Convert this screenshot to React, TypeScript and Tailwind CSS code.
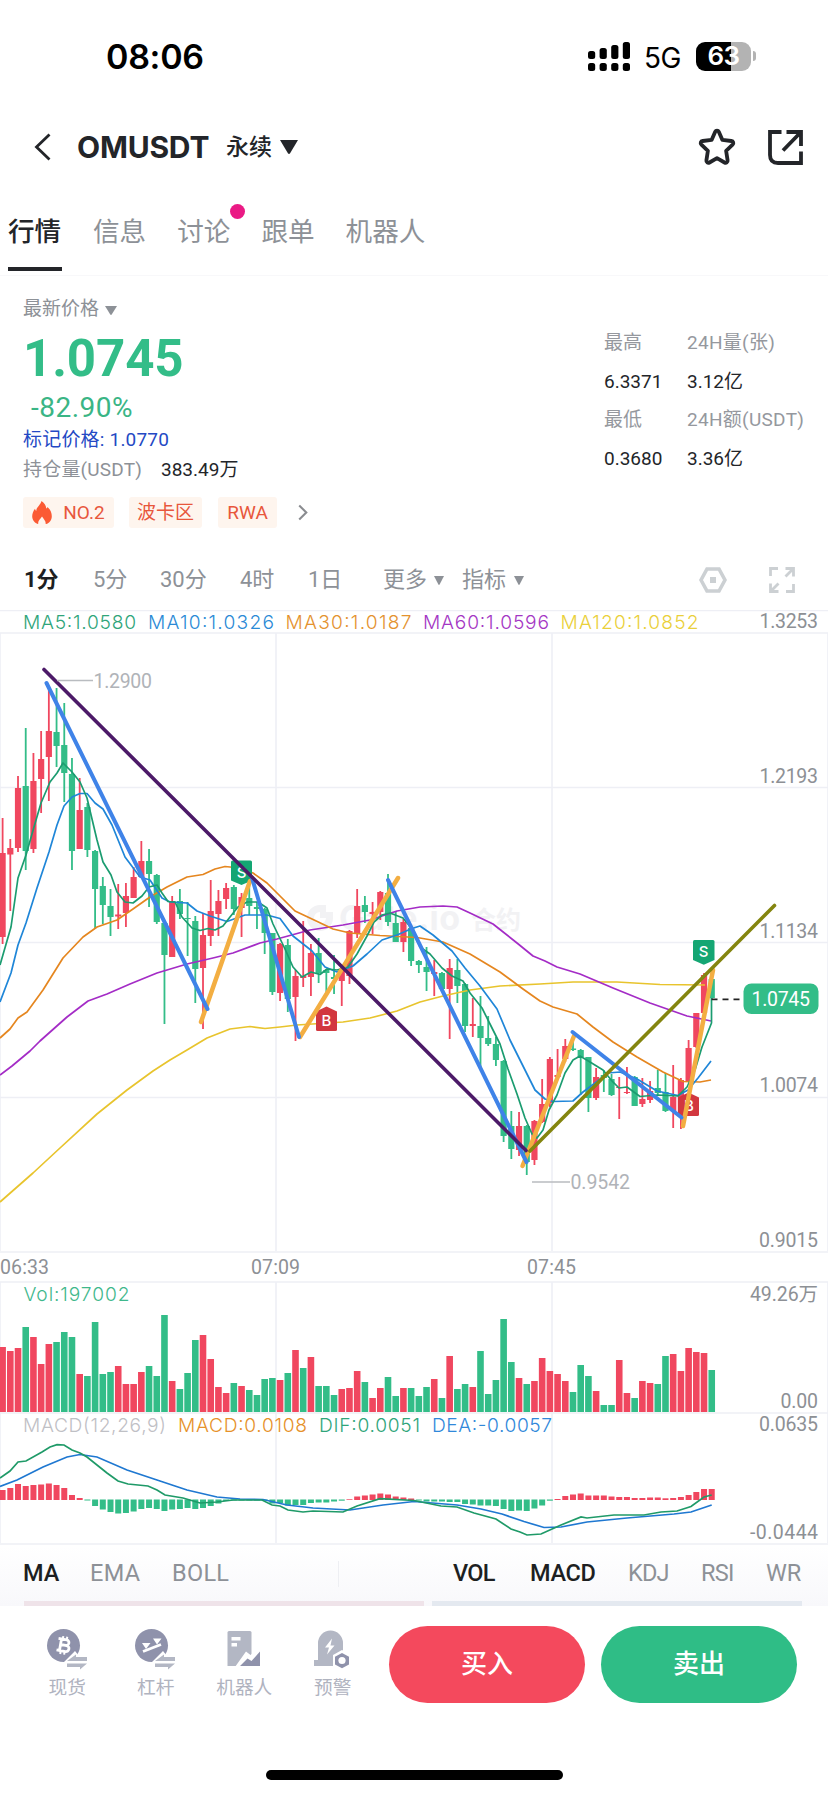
import type { ReactNode } from "react";

const UP = "#f0475f";
const DOWN = "#33bd88";
const GRID = "#eeeff5";

const PITCH = 7.708;
const START_X = 2.6;

type Candle = ["u" | "d", number, number, number, number];

// direction, high, low, body top, body bottom
const CANDLES: Candle[] = [
  ["u", 818, 944, 853, 937], ["u", 839, 911, 848, 854.5], ["u", 776, 852, 788, 848], ["d", 728, 870, 786, 851],
  ["u", 753, 853, 781, 849], ["u", 731, 813, 759, 779], ["u", 690, 801, 731, 757], ["d", 688, 767, 732, 746],
  ["d", 703, 802, 745, 773], ["d", 758, 870, 774, 851], ["u", 778, 849, 810, 849], ["d", 803, 857, 807, 850],
  ["d", 850, 929, 851, 889], ["d", 877, 924, 886, 905], ["d", 889, 936, 906, 917], ["u", 884, 929, 914.5, 916.5],
  ["u", 883, 927, 896, 913], ["u", 867, 898, 877, 898], ["u", 841, 877, 861, 877], ["d", 849, 907, 861, 874],
  ["d", 874, 924, 875, 922], ["d", 922, 1024, 923, 955], ["u", 896, 957, 901, 957], ["d", 889, 919, 901, 914],
  ["d", 902, 956, 918, 919], ["d", 916, 1003, 921, 969], ["u", 913, 1029, 935, 968], ["u", 880, 946, 911, 936],
  ["u", 890, 936, 901, 914], ["u", 883, 909, 888, 899], ["d", 885, 915, 887, 909], ["u", 893, 937, 897, 908],
  ["d", 885, 915, 898, 906], ["d", 902, 929, 907, 909], ["d", 908, 954, 909, 933], ["d", 933, 995, 933, 992],
  ["u", 943, 1001, 944, 993], ["d", 939, 1012, 945, 999], ["u", 970, 1041, 976, 997], ["u", 921, 987, 976, 978],
  ["u", 944, 996, 953, 977], ["d", 938, 983, 953, 973], ["d", 969, 994, 970, 973], ["d", 955, 994, 977, 979],
  ["u", 968, 1006, 969, 981], ["u", 930, 984, 931, 976], ["u", 889, 938, 906, 934], ["d", 896, 923, 905, 912],
  ["u", 902, 934, 912, 914], ["u", 891, 920, 892, 912], ["d", 874, 926, 893, 922], ["d", 911, 942, 923, 942],
  ["u", 919, 952, 922, 942], ["d", 926, 966, 928, 961], ["d", 960, 973, 961, 965], ["d", 947, 991, 967, 972],
  ["u", 960, 996, 972, 974], ["d", 972, 990, 973, 989], ["u", 959, 1039, 968, 989], ["d", 959, 1003, 970, 986],
  ["d", 983, 1032, 984, 1026], ["u", 998, 1037, 1024, 1026], ["d", 996, 1069, 1026, 1038], ["d", 1016, 1046, 1038, 1044],
  ["d", 1037, 1066, 1044, 1060], ["d", 1060, 1142, 1061, 1136], ["d", 1111, 1159, 1126, 1149], ["u", 1112, 1156, 1126, 1150],
  ["d", 1125, 1175, 1126, 1162], ["u", 1120, 1165, 1121, 1160], ["u", 1079, 1123, 1104, 1122], ["u", 1057, 1107, 1059, 1103],
  ["u", 1049, 1078, 1075, 1077], ["u", 1039, 1062, 1046, 1059], ["d", 1037, 1051, 1048.5, 1050], ["d", 1049, 1095, 1050, 1057],
  ["d", 1057, 1112, 1057, 1098], ["u", 1068, 1100, 1077, 1098], ["d", 1070, 1092, 1075, 1078], ["d", 1074, 1096, 1079, 1095],
  ["u", 1077, 1119, 1087, 1088], ["u", 1067, 1094, 1092, 1093], ["d", 1076, 1106, 1077, 1106], ["u", 1078, 1107, 1099, 1104],
  ["u", 1081, 1103, 1091, 1100], ["d", 1070, 1096, 1088, 1093], ["d", 1073, 1112, 1092, 1111], ["u", 1065, 1128, 1097, 1111],
  ["u", 1078, 1129, 1080, 1113], ["u", 1040, 1082, 1048, 1081], ["u", 1013, 1048, 1013, 1047], ["u", 973, 1013, 975, 1013],
  ["d", 973, 999, 979, 998],
];

// bar heights, negative for a falling minute
const VOLUMES = [
  65, 61, 64, -85, 75, 48, 68, -70, -80, -75, 38, -36, -90, -38, -40, 46, 28, 28, 40, -46,
  -36, -97, 31, -23, -39, -72, 77, 53, 25, 19, -29, 26, -22, -17, -33, -34, 32, -39, 62, -44,
  55, -26, -26, -17, 23, 24, 41, -30, 14, 24, -35, -16, 24, -24, -16, -25, 33, -14, 56, -23,
  -28, 25, -61, -18, -32, -93, -50, 34, -28, 31, 54, 41, 38, 31, -20, -47, -36, 21, -7, -7,
  52, 19, -14, 31, 29, -28, -56, 58, 41, 64, 60, 59, -42,
];

const MACD = [
  10, 12, 16, 14, 15, 15.5, 16.5, 15, 12, 5, 2, -1, -6.5, -10, -12.5, -14, -13.5, -12, -9.5, -8.5,
  -9.5, -11.5, -10, -9.5, -8.5, -9.5, -8.5, -6.5, -4, -1.5, -1, -1, -1, -1, -1, -4, -3.5, -6, -5.5, -5.5,
  -3.5, -3, -3, -2, -1.2, 0.7, 3.5, 4.5, 5.5, 6.5, 5.5, 3.5, 2.5, 1.5, -1, -2, -2, -2, -2.5, -2.5,
  -4.5, -5, -6, -6, -6.5, -9.5, -11.5, -11, -11.5, -9, -6, -1.2, 1, 4, 5.5, 6.5, 4.5, 4.5, 4.5, 3.5,
  3, 3, 2, 2, 2.5, 2.5, 1.7, 2, 3, 5, 8, 11, 11,
];

const AVERAGES = [
  {
    color: "#e8c42d",
    points:
      "0,1202 33,1173 60,1148 97,1114 127,1090 153,1071 170,1060 187,1050 207,1038 230,1029 250,1026.5 265,1028.5 280,1027 297,1025 343,1022 370,1018 397,1011 420,1002 443,996 470,990 500,986 540,984 573,982 617,982 660,984.5 705,985",
  },
  {
    color: "#a42cc6",
    points:
      "0,1075 12,1066 30,1051 40,1041 67,1017 88,1001 107,994 130,984 157,973 187,964 213,958 233,953 260,943 277,939 310,930 343,925 370,920 397,911 420,907 443,906 457,907 470,913 493,924 517,943 533,956 545,961 557,967 580,974 613,988 650,1003 687,1016 711,1021",
  },
  {
    color: "#e5861f",
    points:
      "0,1038 10,1029 18,1018 27,1012 43,990 63,958 83,937 97,927 117,920 133,909 150,897 167,887 187,877 203,874.5 215,869 225,866.5 240,868 253,873 267,883 280,896 295,911 312,919 333,929 350,933 380,935.5 417,937.5 443,942 470,954 500,972 523,989 540,1001 553,1007 577,1014 593,1027 613,1042 637,1057 663,1072 683,1081.5 700,1082 711,1080",
  },
  {
    color: "#1f86d8",
    points:
      "0,1002 11,973 18,945 26,923 37,888 49,852 57,825 64,806 72,797 80,793.5 87,793.5 95,803 103,809 112,825 125,857 140,877 150,880 162,898 170,902 187,903 197,911 210,916 227,921.5 245,915 267,915 280,918.5 293,936 312,951 325,967 337,972 353,966 367,954 382,940 397,935 412,928.5 420,926 433,935 452,951 465,968 480,986 497,1009 510,1040 525,1070 535,1090 545,1099 553,1101.5 573,1101 583,1092 595,1083 608,1073 620,1072 637,1079 657,1091 678,1095.5 688,1090 698,1078 711,1061",
  },
  {
    color: "#1b9c70",
    points:
      "0,965 11,927 18,878 26,855 34,827 41,803 50,782 57,773 63,763 72,772 80,782 87,798 97,840 103,862 111,875 117,892 125,902 133,903 142,896 149,887 157,885 162,893 168,901.5 175,902 182,917 192,928 200,930.5 208,928.5 215,930 223,926 230,917 238,907 247,902 258,902 267,908 273,924 285,949 293,967 302,977 311,972 320,974.5 327,969 337,970 348,967 357,954 367,936 374,922 382,915 390,913 403,918 412,929 420,947 430,954 442,968 452,976 463,981 470,993 482,1008 490,1024 500,1044 508,1069 517,1094 525,1118 532,1134 537,1138 543,1130 549,1110 557,1095 565,1073 573,1060 580,1056 590,1062 603,1070 612,1081 619,1088 627,1087 640,1096.5 657,1095 678,1096 687,1087 695,1070 702,1047 711.5,1023 711.5,998",
  },
];

const DIF =
  "0,1478 10,1471 18,1462 26,1461 42,1452 50,1447 57,1444.7 64,1445 72,1450 80,1453 87,1457 107,1473 118,1481 128,1484 148,1486 157,1490 165,1495 183,1498 200,1503 217,1502 233,1500 262,1500 272,1505 280,1506 288,1510 303,1512 313,1511 343,1512 357,1506 380,1498.7 414,1500.5 441,1506 457,1507 474,1513 496,1519 511,1529 520,1532 527,1535 541,1534 561,1525 581,1517 587,1518 614,1515 644,1515 661,1512 677,1511 691,1506.5 704,1497 711.7,1495";
const DEA =
  "0,1486.5 17,1480 43,1467 67,1457 80,1454.5 97,1457 127,1470 160,1481 187,1490 217,1497 240,1499 263,1499.5 287,1505 313,1508 350,1510 383,1505 414,1501.5 457,1505 481,1509 502,1514 524,1521.5 544,1527.5 561,1527 587,1522 627,1518 674,1514 691,1512 711.7,1505";

const STROKES = [
  { color: "#f3ae42", width: 4.5, d: "M201 1022L250 881" },
  { color: "#f3ae42", width: 4.5, d: "M300 1037L398 878" },
  { color: "#f3ae42", width: 4.5, d: "M522.5 1166L574 1036" },
  { color: "#f3ae42", width: 4.5, d: "M683 1126L713 970" },
  { color: "#3f83e8", width: 4, d: "M46.5 683L207.5 1009" },
  { color: "#3f83e8", width: 4, d: "M252 878L299 1037" },
  { color: "#3f83e8", width: 4, d: "M388 880L526.5 1162" },
  { color: "#3f83e8", width: 4, d: "M572.5 1032L681.5 1117.5" },
  { color: "#84850f", width: 3.6, d: "M530 1151L774.5 905.5" },
  { color: "#4c1a68", width: 3.6, d: "M44 669.5L526 1150.5" },
];

const LEGEND = [
  { text: "MA5:1.0580", x: 23, y: 629, length: 113, color: "#2fa57a" },
  { text: "MA10:1.0326", x: 148, y: 629, length: 126, color: "#2b8ad6" },
  { text: "MA30:1.0187", x: 285.5, y: 629, length: 126, color: "#e4922f" },
  { text: "MA60:1.0596", x: 423, y: 629, length: 126, color: "#a436c4" },
  { text: "MA120:1.0852", x: 560.5, y: 629, length: 138, color: "#ead03a" },
  { text: "Vol:197002", x: 23.5, y: 1301, length: 106, color: "#3fb88c" },
  { text: "MACD(12,26,9)", x: 23, y: 1432, length: 143, color: "#bfc0c5" },
  { text: "MACD:0.0108", x: 178, y: 1432, length: 129, color: "#e6912a" },
  { text: "DIF:0.0051", x: 319, y: 1432, length: 101, color: "#2fa57a" },
  { text: "DEA:-0.0057", x: 432, y: 1432, length: 120, color: "#3088da" },
];

const AXIS = [
  { text: "1.3253", x: 759.5, y: 628, length: 58.5 },
  { text: "1.2193", x: 759.5, y: 783, length: 58.5 },
  { text: "1.1134", x: 759.5, y: 937.500, length: 58.5 },
  { text: "1.0074", x: 759.5, y: 1092, length: 58.5 },
  { text: "0.9015", x: 759, y: 1247, length: 59 },
  { text: "06:33", x: 0, y: 1274, length: 49 },
  { text: "07:09", x: 251, y: 1274, length: 49 },
  { text: "07:45", x: 527, y: 1274, length: 49 },
  { text: "49.26万", x: 750, y: 1300.5, length: 68 },
  { text: "0.00", x: 780.5, y: 1408, length: 37.5 },
  { text: "0.0635", x: 759, y: 1431, length: 59 },
  { text: "-0.0444", x: 750, y: 1539, length: 68 },
];

function Caret({ className }: { className: string }) {
  return (
    <svg viewBox="0 0 10 8" preserveAspectRatio="none" className={className} aria-hidden>
      <path d="M0 0h10L5.600 7.600q-.6.700-1.200 0z" fill="currentColor" />
    </svg>
  );
}

function StatusBar() {
  return (
    <header className="flex h-[112px] items-center pl-[106px] pr-[72px] font-['Inter',sans-serif] text-black">
      <span className="mt-[2px] text-[34px] font-semibold leading-none tracking-[-0.3px]">08:06</span>
      <svg viewBox="0 0 42 29" className="ml-auto h-[29px] w-[42px]" aria-hidden>
        {[9, 6, 3, 0].map((top, i) => (
          <g key={top}>
            <rect x={i * 11.6} y={top} width="7.2" height={17 - top} rx="2.5" />
            <rect x={i * 11.6} y="21" width="7.2" height="8" rx="2.5" />
          </g>
        ))}
      </svg>
      <span className="ml-[14px] mt-[3px] text-[28px] leading-none tracking-[-0.5px]">5G</span>
      <div className="relative ml-[15px] flex h-[29px] w-[55px] items-center justify-center overflow-hidden rounded-[9px] bg-[linear-gradient(90deg,#000_63%,#b3b3b3_63%)]">
        <span className="text-[26px] font-semibold leading-none tracking-[-0.5px] text-white">63</span>
      </div>
      <div className="ml-[2px] h-[10px] w-[3px] rounded-r-full bg-[#b3b3b3]" />
    </header>
  );
}

function TitleBar() {
  return (
    <div className="flex h-[70px] items-center pl-[34px] pr-[25px] text-[#232529]">
      <svg viewBox="0 0 17 28" className="h-[28px] w-[17px]" fill="none" stroke="currentColor" strokeWidth="2.8" aria-hidden>
        <path d="M15.5 1.5L2.5 14l13 12.5" />
      </svg>
      <h1 className="ml-[26px] w-[149px] font-['Inter',sans-serif] text-[30px] font-bold leading-none tracking-[-0.2px]">OMUSDT</h1>
      <span className="text-[23px] font-medium leading-none">永续</span>
      <Caret className="ml-[8px] h-[14px] w-[18px]" />
      <svg viewBox="0 0 38 38" className="ml-auto h-[38px] w-[38px]" fill="none" stroke="currentColor" strokeWidth="3.8" strokeLinejoin="round" aria-hidden>
        <path d="M19 2.6c.9 0 1.500.5 1.900 1.300l3.500 8 8.900 1.100c2 .3 2.700 2.200 1.300 3.600l-6.500 6.200 1.500 9.600c.3 1.900-1.500 3-3.100 2.100L19 30.200l-7.500 4.300c-1.600.9-3.400-.2-3.100-2.100l1.500-9.600-6.500-6.200C2 15.200 2.700 13.300 4.700 13l8.900-1.100 3.500-8c.4-.8 1-1.300 1.900-1.300z" />
      </svg>
      <svg viewBox="0 0 35 35" className="ml-[32px] h-[35px] w-[35px]" fill="none" stroke="currentColor" strokeWidth="3.8" aria-hidden>
        <path d="M13.500 2H2V25q0 8 8 8H33V21.500M18.500 2H33V16M32.500 2.500L15 20.500" />
      </svg>
    </div>
  );
}

const TABS = ["行情", "信息", "讨论", "跟单", "机器人"];

function Tabs() {
  return (
    <nav className="flex h-[94px] items-end gap-[31px] border-b border-[#f8f8fa] pl-[8px] text-[26.6px]">
      {TABS.map((tab, i) => (
        <div
          key={tab}
          className={
            i === 0
              ? "relative flex h-[75px] flex-col justify-between font-medium text-[#232529]"
              : "relative flex h-[75px] flex-col text-[#8d9197]"
          }
        >
          <span className="pt-[10px] leading-[44px]">{tab}</span>
          {i === 0 && <span className="mb-[4px] h-[4px] w-[54px] bg-[#232529]" />}
          {tab === "讨论" && <i className="absolute -right-[15px] top-[4px] size-[15px] rounded-full bg-[#ea1a85]" />}
        </div>
      ))}
    </nav>
  );
}

function Tag({ children, className }: { children: ReactNode; className: string }) {
  return (
    <span className={`flex h-[31px] items-center justify-center rounded-[3px] bg-[#fef5ee] text-[19px] leading-none text-[#e8573c] ${className}`}>
      {children}
    </span>
  );
}

const STATS = [
  { label: "最高", value: "6.3371", label2: "24H量(张)", value2: "3.12亿" },
  { label: "最低", value: "0.3680", label2: "24H额(USDT)", value2: "3.36亿" },
];

function Quote() {
  return (
    <section className="flex h-[273px] pl-[23px] pt-[18px]">
      <div className="flex w-[581px] flex-col">
        <div className="flex h-[30px] items-center text-[19px] text-[#8d9197]">
          最新价格
          <Caret className="ml-[6px] mt-[2px] h-[9px] w-[12px]" />
        </div>
        <div className="mt-[3px] h-[64px] text-[51px] font-bold leading-[64px] tracking-[-0.1px] text-[#33bd88]">1.0745</div>
        <div className="h-[34px] pl-[8px] text-[28px] leading-[34px] tracking-[0.5px] text-[#3ab585]">-82.90%</div>
        <div className="h-[29px] text-[19px] leading-[29px] tracking-[0.2px] text-[#2449c4]">标记价格: 1.0770</div>
        <div className="flex h-[31px] text-[19px] leading-[31px] text-[#8d9197]">
          <span className="w-[138px] tracking-[0.2px]">持仓量(USDT)</span>
          <span className="text-[#232529]">383.49万</span>
        </div>
        <div className="mt-[12px] flex items-center">
          <Tag className="w-[91px] gap-[11px]">
            <svg viewBox="0 0 20 23" className="h-[23px] w-[20px]" aria-hidden>
              <path
                d="M9.500 0c2.600 1.800 4.600 4.400 4.800 7.600.6-.4 1-.9 1.200-1.600 2.800 2.500 4.300 5.800 4.300 9.200 0 4-2.700 7.300-6.200 7.900.6-2.600-1.800-4.800-3.600-7.500-1.800 2.700-4.500 4.700-3.700 7.500C3.300 22.600.2 19.600.2 15.300c0-3 1.300-5.600 2.800-7.600.2 1 .6 1.700 1.200 2.200C4.400 6 8.600 4 9.500 0z"
                fill="#fb5a34"
              />
            </svg>
            NO.2
          </Tag>
          <Tag className="ml-[15px] w-[73px]">波卡区</Tag>
          <Tag className="ml-[16px] w-[59px]">RWA</Tag>
          <svg viewBox="0 0 10 18" className="ml-[21px] h-[17px] w-[10px]" fill="none" stroke="#8a8c90" strokeWidth="2.2" aria-hidden>
            <path d="M1 1.500L8.500 9 1 16.500" />
          </svg>
        </div>
      </div>
      <div className="flex flex-col pt-[30px] text-[19px] leading-[38.700px]">
        {STATS.map((row) => (
          <div key={row.label} className="grid grid-cols-[83px_auto]">
            <span className="text-[#95989e]">{row.label}</span>
            <span className="whitespace-nowrap tracking-[0.3px] text-[#95989e]">{row.label2}</span>
            <span className="text-[#232529]">{row.value}</span>
            <span className="text-[#232529]">{row.value2}</span>
          </div>
        ))}
      </div>
    </section>
  );
}

function Timeframes() {
  return (
    <div className="flex h-[61px] items-center pl-[24px] pr-[33px] text-[22px] text-[#8d9197]">
      <span className="w-[69px] font-bold text-[#1d1f22]">1分</span>
      <span className="w-[67px]">5分</span>
      <span className="w-[80px]">30分</span>
      <span className="w-[68px]">4时</span>
      <span className="w-[75px]">1日</span>
      <span>更多</span>
      <Caret className="ml-[7px] mt-[2px] h-[9px] w-[10px]" />
      <span className="ml-[18px]">指标</span>
      <Caret className="ml-[8px] mt-[2px] h-[9px] w-[10px]" />
      <svg viewBox="0 0 28 26" className="ml-auto h-[26px] w-[28px]" fill="none" stroke="#ccd0d3" strokeWidth="3.6" aria-hidden>
        <path d="M8 2h12l6 11-6 11H8L2 13z" />
        <rect x="11" y="10" width="6" height="6" fill="#ccd0d3" stroke="none" />
      </svg>
      <svg viewBox="0 0 26 26" className="ml-[42px] h-[26px] w-[26px]" fill="none" stroke="#ccd0d3" strokeWidth="2.8" aria-hidden>
        <path d="M1.500 9V1.500H9M17 24.500h7.500V17M16.500 1.500h8V9.500M24.500 1.500L16.500 9.500M1.500 16.500v8H9.500M1.500 24.500L9.500 16.500" />
      </svg>
    </div>
  );
}

function Chart() {
  const at = (i: number) => START_X + i * PITCH;
  return (
    <svg viewBox="0 610 828 936" className="block h-[936px] w-[828px]">
      <g stroke={GRID} strokeWidth="1.6">
        {[610.5, 633, 787.5, 942.5, 1097.5, 1252, 1282, 1413, 1544].map((y) => (
          <path key={y} d={`M0 ${y}H828`} />
        ))}
        {[0, 276, 552, 828].map((x) => (
          <path key={x} d={`M${x} 633V1251M${x} 1282V1543`} />
        ))}
      </g>

      <g fill="#f2f2f4">
        <path d="M320 905a13 13 0 1 0 13 13h-7a6 6 0 1 1-6-6z" />
        <path d="M320 905h6v7h7v6h-13z" />
        <text x="339" y="930" fontSize="34" fontWeight="700" textLength="121" fontFamily="Inter, sans-serif">Gate.io</text>
        <text x="471" y="929" fontSize="25" fontWeight="700" fontFamily="Noto Sans CJK SC, sans-serif">合约</text>
      </g>

      {CANDLES.map(([dir, high, low, top, bottom], i) => (
        <g key={i} fill={dir === "u" ? UP : DOWN}>
          <rect x={at(i) - 0.9} y={high} width="1.8" height={low - high} />
          <rect x={at(i) - 3.1} y={top} width="6.2" height={bottom - top} />
        </g>
      ))}

      <g fill="none" strokeWidth="1.7" strokeLinejoin="round">
        {AVERAGES.map((line) => (
          <polyline key={line.color} points={line.points} stroke={line.color} />
        ))}
      </g>

      <g fontFamily="Inter, sans-serif" fontSize="15" fontWeight="500" textAnchor="middle">
        <path d="M231 862q0-1.500 1.500-1.500h18q1.500 0 1.500 1.500v18.500L241.500 885 231 880.500z" fill="#14a673" />
        <text x="241.500" y="878" fill="#fff">S</text>
        <path d="M693 941.500q0-1.500 1.500-1.500h18.500q1.500 0 1.500 1.500V960l-10.700 4.700L693 960z" fill="#14a673" />
        <text x="703.500" y="957" fill="#fff">S</text>
        <path d="M316 1011.500L326.500 1006.500 337 1011.500V1029.500q0 1.500-1.500 1.500h-18q-1.500 0-1.500-1.500z" fill="#d2373f" />
        <text x="326.500" y="1025.500" fill="#fff">B</text>
        <path d="M678 1097.500L688.500 1092.500 699 1097.500V1114.500q0 1.500-1.500 1.500h-18q-1.500 0-1.500-1.500z" fill="#d2373f" />
        <text x="689" y="1110.500" fill="#fff">B</text>
      </g>

      <path d="M711.500 999.300H743" stroke="#222" strokeWidth="1.800" strokeDasharray="6 5" />

      <g fill="none" strokeLinecap="round">
        {STROKES.map((s) => (
          <path key={s.d} d={s.d} stroke={s.color} strokeWidth={s.width} />
        ))}
      </g>

      <path d="M57 680.500H93M532 1182H570" stroke="#b9bcc0" strokeWidth="1.500" />
      <g fontFamily="Roboto, sans-serif" fontSize="19.5" fill="#b0b3b8">
        <text x="93.500" y="688" textLength="58.500">1.2900</text>
        <text x="570.500" y="1189" textLength="59.500">0.9542</text>
      </g>

      {VOLUMES.map((v, i) => (
        <rect key={i} x={at(i) - 3.3} y={1412 - Math.abs(v)} width="6.6" height={Math.abs(v)} fill={v > 0 ? UP : DOWN} />
      ))}
      {MACD.map((v, i) => (
        <rect key={i} x={at(i) - 3} y={v > 0 ? 1500 - v : 1499.5} width="6" height={Math.abs(v)} fill={v > 0 ? UP : DOWN} />
      ))}
      <polyline points={DEA} fill="none" stroke="#1f78d1" strokeWidth="1.700" />
      <polyline points={DIF} fill="none" stroke="#1f9a68" strokeWidth="1.700" />

      <g fontFamily="Inter, sans-serif" fontSize="19.200" fontWeight="300">
        {LEGEND.map((l) => (
          <text key={l.text} x={l.x} y={l.y} textLength={l.length} fill={l.color}>{l.text}</text>
        ))}
      </g>
      <g fontFamily="Roboto, Noto Sans CJK SC, sans-serif" fontSize="19.500" fill="#8d9095">
        {AXIS.map((l) => (
          <text key={l.text} x={l.x} y={l.y} textLength={l.length}>{l.text}</text>
        ))}
      </g>

      <rect x="743.500" y="983.500" width="75" height="30.500" rx="8" fill={DOWN} />
      <text x="751.500" y="1005.500" fontFamily="Roboto, sans-serif" fontSize="19.500" textLength="58.500" fill="#fff">1.0745</text>
    </svg>
  );
}

function Indicators() {
  return (
    <div className="flex h-[60px] flex-col justify-between bg-gradient-to-b from-white to-[#f8f8fb]">
      <div className="flex h-[55px] items-center pl-[23px] pr-[25px] text-[23.500px] text-[#8d9197]">
        <span className="w-[67px] font-medium text-[#1d1f22]">MA</span>
        <span className="w-[82px] tracking-[0.3px]">EMA</span>
        <span className="tracking-[0.3px]">BOLL</span>
        <i className="ml-auto mr-[114px] h-[26px] w-px bg-[#eeeff3]" />
        <span className="w-[77px] font-medium tracking-[-0.7px] text-[#1d1f22]">VOL</span>
        <span className="w-[98px] font-medium tracking-[-0.3px] text-[#1d1f22]">MACD</span>
        <span className="w-[73px] tracking-[-0.8px]">KDJ</span>
        <span className="w-[65px] tracking-[-0.7px]">RSI</span>
        <span className="w-[37px]">WR</span>
      </div>
      <div className="flex h-[5px] gap-[8px] pl-[24px]">
        <i className="w-[400px] bg-[#efe3e9]" />
        <i className="w-[370px] bg-[#e4e9f0]" />
      </div>
    </div>
  );
}

function SwapArrows() {
  return (
    <g>
      <path d="M17 33L28 22l4 5h9v15H20z" fill="#fff" />
      <path d="M20 32l9-6.500V28h11v4zM20 34.500h20l-7 6V38H20z" fill="#b3b7c4" />
    </g>
  );
}

const SHORTCUTS = [
  {
    label: "现货",
    icon: (
      <>
        <circle cx="16.500" cy="16.500" r="16.500" fill="#8f92ab" />
        <g transform="rotate(10 17 16)" fill="none" stroke="#fff" strokeWidth="2.800">
          <path d="M10.500 10.500h8.200a2.800 2.800 0 0 1 0 5.600h-5.200M13.500 9.500v13.500M10.500 22.200h9a3 3 0 0 0 0-6.100h-6" />
          <path d="M14.800 7.300v3M18.800 7.300v3M14.800 22v3.500M18.800 22v3.500" strokeWidth="2" />
        </g>
        <SwapArrows />
      </>
    ),
  },
  {
    label: "杠杆",
    icon: (
      <>
        <circle cx="16.500" cy="16.500" r="16.500" fill="#8f92ab" />
        <path d="M8 22.500L26 15.500" stroke="#fff" strokeWidth="2.800" />
        <path d="M7 14h8.500l-4.500 6zM18 9.500h8.500L22 15.500z" fill="#fff" />
        <SwapArrows />
      </>
    ),
  },
  {
    label: "机器人",
    icon: (
      <>
        <path d="M5 2h21q1.500 0 1.500 1.500V37h-24V3.500Q3.500 2 5 2z" fill="#b3b7c4" />
        <path d="M7.500 8h9v3.500h-9zM7.500 14h5.500v3.500H7.500z" fill="#fff" />
        <path d="M11 38l11-15.500 4.500 3.500L37 17v21z" fill="#fff" />
        <path d="M16 37l7.500-7.500 4 2.500 8.500-9.500V37z" fill="#8f92ab" />
      </>
    ),
  },
  {
    label: "预警",
    icon: (
      <>
        <path d="M6 31V14a12.500 12.500 0 0 1 25 0v10l-9 13H2v-6z" fill="#b3b7c4" />
        <path d="M20 9.500l-7 9h4l-2 7 7.500-9h-4z" fill="#fff" />
        <path d="M30 21l9 5v12l-9 4-9-4v-12z" fill="#fff" />
        <path d="M30 24l7 3.800v7.600l-7 3.800-7-3.800v-7.600z" fill="#8f92ab" />
        <circle cx="30" cy="31.500" r="3.600" fill="#fff" />
      </>
    ),
  },
];

function ActionBar() {
  return (
    <footer className="flex h-[144px] pl-[23px] pr-[31px] pt-[20px]">
      <div className="flex w-[366px]">
        {SHORTCUTS.map((item) => (
          <div key={item.label} className="flex w-[88.500px] flex-col items-center pt-[3px] text-[18.700px] text-[#b0b3bf]">
            <svg viewBox="0 0 41 42" className="h-[42px] w-[41px]" aria-hidden>{item.icon}</svg>
            <span className="mt-[3px] leading-[28px]">{item.label}</span>
          </div>
        ))}
      </div>
      <button className="h-[77px] w-[196px] rounded-full bg-[#f4495d] text-[26px] font-medium text-white">买入</button>
      <button className="ml-auto h-[77px] w-[196px] rounded-full bg-[#2fbd86] text-[26px] font-medium text-white">卖出</button>
    </footer>
  );
}

export default function App() {
  return (
    <main className="flex h-[1795px] w-[828px] flex-col overflow-hidden bg-white font-['Roboto','Noto_Sans_CJK_SC',sans-serif]">
      <StatusBar />
      <TitleBar />
      <Tabs />
      <Quote />
      <Timeframes />
      <Chart />
      <Indicators />
      <ActionBar />
      <div className="mx-auto mt-[20px] h-[10px] w-[297px] rounded-full bg-black" />
    </main>
  );
}
